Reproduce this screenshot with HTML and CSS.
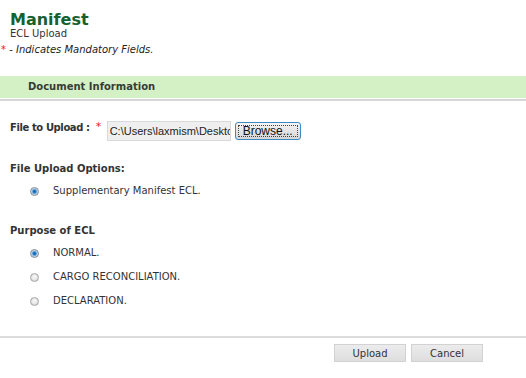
FILE: index.html
```html
<!DOCTYPE html>
<html lang="en">
<head>
    <meta charset="UTF-8">
    <title>Manifest - ECL Upload</title>
    <link rel="stylesheet" href="styles.css">
</head>
<body>
    <div class="page-head">
        <h1 class="title">Manifest</h1>
        <div class="subtitle">ECL Upload</div>
    </div>
    <div class="mandatory"><span class="req">*</span> - <i>Indicates Mandatory Fields.</i></div>

    <form action="#" method="POST">
        <div class="section">
            <div class="section-title">Document Information</div>
        </div>

        <div class="form-body">
            <!-- file -->
            <div class="field-row">
                <label class="field-label">File to Upload :</label>
                <span class="req star">*</span>
                <div class="file-box">C:\Users\laxmism\Desktop\ECL.txt</div>
                <button type="button" class="browse">Browse...</button>
            </div>

            <!-- upload options -->
            <div class="group-label">File Upload Options:</div>
            <div class="radio-list">
                <label class="radio-row"><input type="radio" name="option" checked> Supplementary Manifest ECL.</label>
            </div>

            <!-- purpose -->
            <div class="group-label purpose">Purpose of ECL</div>
            <div class="radio-list">
                <label class="radio-row"><input type="radio" name="purpose" checked> NORMAL.</label>
                <label class="radio-row"><input type="radio" name="purpose"> CARGO RECONCILIATION.</label>
                <label class="radio-row"><input type="radio" name="purpose"> DECLARATION.</label>
            </div>
        </div>

        <div class="actions">
            <button type="submit" class="btn">Upload</button>
            <button type="button" class="btn">Cancel</button>
        </div>
    </form>
</body>
</html>
```

FILE: styles.css
```css
* {
    margin: 0;
    padding: 0;
    box-sizing: border-box;
}

body {
    font-family: "DejaVu Sans", Verdana, sans-serif;
    font-size: 10px;
    color: #333;
    background: #fff;
}

.page-head {
    padding: 12px 0 0 10px;
}

.title {
    font-size: 16px;
    line-height: 16px;
    font-weight: bold;
    color: #17602f;
}

.subtitle {
    line-height: 12px;
    color: #333;
}

.mandatory {
    margin-top: 4px;
    padding-left: 1px;
    line-height: 12px;
    color: #222;
}

.req {
    color: #e8161b;
    font-style: normal;
}

.section {
    margin-top: 20px;
    padding-bottom: 1px;
    border-bottom: 2px solid #d6d6d6;
}

.section-title {
    height: 22px;
    line-height: 22px;
    padding-left: 28px;
    background: #d4f1c6;
    font-weight: bold;
    color: #363c36;
}

.form-body {
    padding-left: 10px;
}

.field-row {
    display: flex;
    align-items: flex-start;
    margin-top: 20px;
}

.field-label {
    line-height: 14px;
    font-weight: bold;
    letter-spacing: -0.4px;
}

.star {
    width: 11px;
    margin-left: 6px;
    font-size: 11px;
    line-height: 12px;
}

.file-box {
    width: 124px;
    height: 20px;
    padding: 0 2px;
    overflow: hidden;
    white-space: nowrap;
    background: #efefef;
    border: 1px solid #d9d9d9;
    font-family: "Liberation Sans", Arial, sans-serif;
    font-size: 11px;
    line-height: 18px;
    color: #222;
}

.browse {
    margin: 1px 0 0 4px;
    width: 66px;
    height: 18px;
    border: 1px solid #3c8ac4;
    border-radius: 3px;
    background: linear-gradient(#f4f4f4, #e4e4e4 50%, #d6d6d6);
    outline: 1px dotted #444;
    outline-offset: -4px;
    font-family: "Liberation Sans", Arial, sans-serif;
    font-size: 12px;
    line-height: 14px;
    color: #111;
}

.group-label {
    margin-top: 21px;
    line-height: 14px;
    font-weight: bold;
}

.group-label.purpose {
    margin-top: 26px;
}

.radio-list {
    display: flex;
    flex-direction: column;
    gap: 10px;
    margin-top: 8px;
    padding-left: 20px;
}

.radio-row {
    display: flex;
    align-items: center;
    gap: 14px;
    line-height: 14px;
}

.radio-row input {
    appearance: none;
    width: 9px;
    height: 9px;
    border-radius: 50%;
    border: 1px solid #a4a4a4;
    background: radial-gradient(circle at 50% 40%, #fbfbfb 0, #e2e2e2 60%, #c8c8c8 100%);
}

.radio-row input:checked {
    border-color: #7d8b96;
    background: radial-gradient(circle, #0d5a9e 0, #2f80c6 1.5px, #9fc6e6 2.6px, #e2e2e2 3.6px);
}

.actions {
    display: flex;
    justify-content: flex-end;
    gap: 5px;
    margin-top: 28px;
    padding: 6px 43px 0 0;
    border-top: 2px solid #dcdcdc;
}

.btn {
    width: 72px;
    height: 18px;
    border: 1px solid #d2d2d2;
    background: linear-gradient(#ececec, #dedede);
    font-family: "DejaVu Sans", Verdana, sans-serif;
    font-size: 10px;
    color: #333;
}
```
